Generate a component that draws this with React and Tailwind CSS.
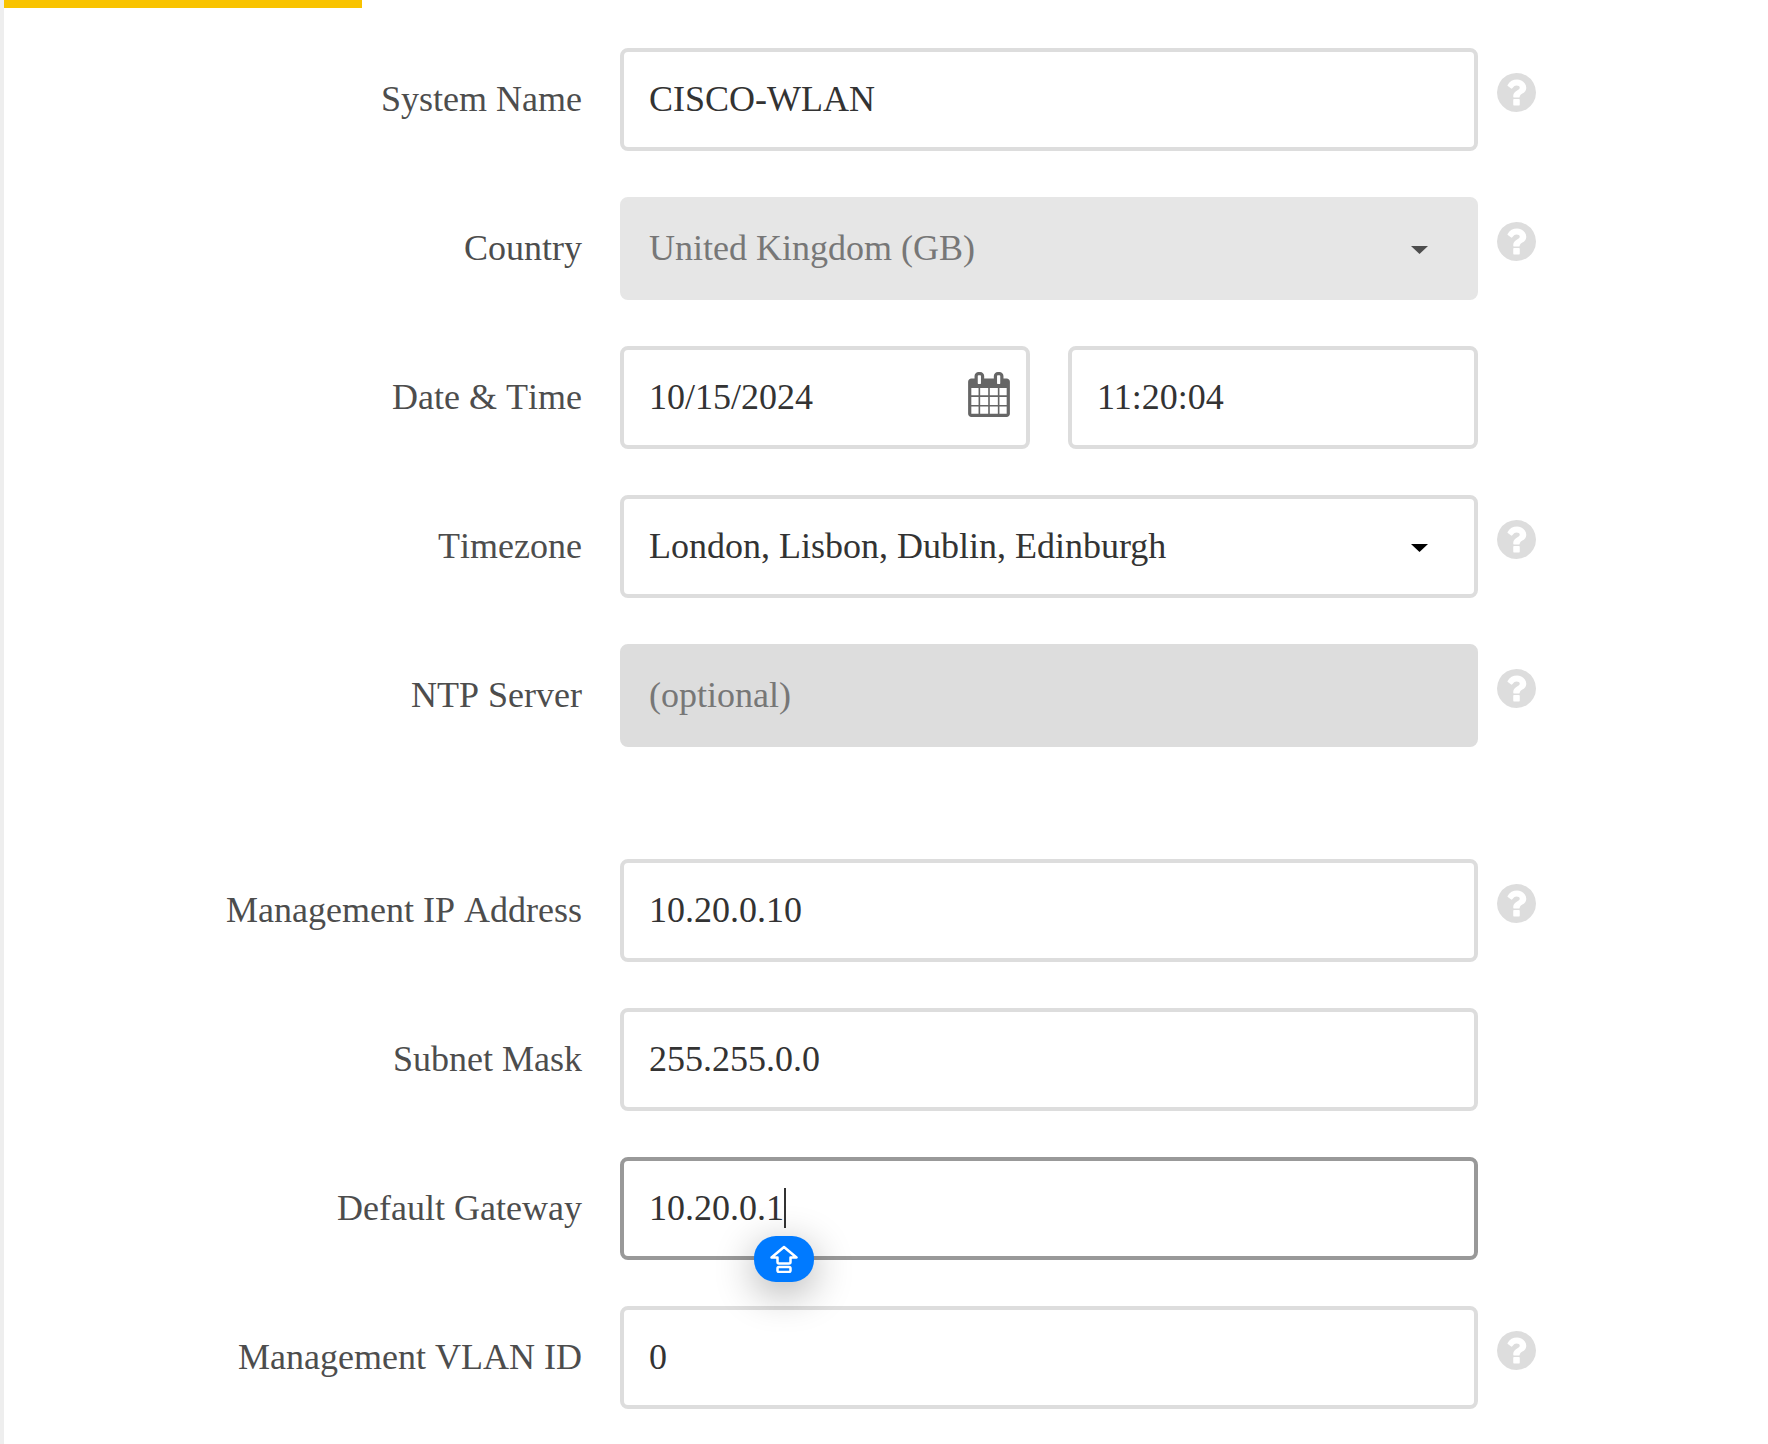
import React from "react";

const box =
  "block w-full h-[103px] rounded-lg border-4 px-[25px] text-4xl leading-10 outline-none";
const open = "border-[#dddddd] bg-white text-[#333333]";

function HelpButton({ about }) {
  return (
    <button
      type="button"
      aria-label={`Help: ${about}`}
      className="mt-[25px] ml-[19px] block size-[39px] shrink-0 text-[#dddddd]"
    >
      <svg viewBox="0 128 1536 1536" fill="currentColor" className="block size-full">
        <path d="M896 1376v-192q0-14-9-23t-23-9h-192q-14 0-23 9t-9 23v192q0 14 9 23t23 9h192q14 0 23-9t9-23zm256-672q0-88-55.5-163t-138.5-116-170-41q-243 0-371 213-15 24 8 42l132 100q7 6 19 6 16 0 25-12 53-68 86-92 34-24 86-24 48 0 85.5 26t37.5 59q0 38-20 61t-68 45q-63 28-115.5 86.5t-52.5 125.5v36q0 14 9 23t23 9h192q14 0 23-9t9-23q0-19 21.5-49.5t54.5-49.5q32-18 49-28.5t46-35 44.5-48 28-60.5 12.5-81zm384 192q0 209-103 385.5t-279.5 279.5-385.5 103-385.5-103-279.5-279.5-103-385.5 103-385.5 279.5-279.5 385.5-103 385.5 103 279.5 279.5 103 385.5z" />
      </svg>
    </button>
  );
}

function CalendarIcon() {
  return (
    <svg viewBox="0 0 1664 1792" fill="currentColor" className="block h-[45px] w-[42px]">
      <path d="M128 1664h288v-288h-288v288zm352 0h320v-288h-320v288zm-352-352h288v-320h-288v320zm352 0h320v-320h-320v320zm-352-384h288v-288h-288v288zm736 736h320v-288h-320v288zm-384-736h320v-288h-320v288zm768 736h288v-288h-288v288zm-384-352h320v-320h-320v320zm-352-864v-288q0-13-9.5-22.5t-22.5-9.5h-64q-13 0-22.5 9.5t-9.5 22.5v288q0 13 9.5 22.5t22.5 9.5h64q13 0 22.5-9.5t9.5-22.5zm736 864h288v-320h-288v320zm-384-384h320v-288h-320v288zm384 0h288v-288h-288v288zm32-480v-288q0-13-9.5-22.5t-22.5-9.5h-64q-13 0-22.5 9.5t-9.5 22.5v288q0 13 9.5 22.5t22.5 9.5h64q13 0 22.5-9.5t9.5-22.5zm384-64v1280q0 52-38 90t-90 38h-1408q-52 0-90-38t-38-90v-1280q0-52 38-90t90-38h128v-96q0-66 47-113t113-47h64q66 0 113 47t47 113v96h384v-96q0-66 47-113t113-47h64q66 0 113 47t47 113v96h128q52 0 90 38t38 90z" />
    </svg>
  );
}

function Row({ id, label, help, children }) {
  return (
    <div className="grid grid-cols-[616fr_858fr_290fr]">
      <label
        htmlFor={id}
        className="flex items-center justify-end pr-[38px] pb-[2px] text-right text-4xl leading-10 text-[#4d4d4d] [font-kerning:none]"
      >
        {label}
      </label>
      <div className="min-w-0">{children}</div>
      {help ? <HelpButton about={label} /> : <div />}
    </div>
  );
}

function TextField({ id, ...props }) {
  return <input id={id} type="text" className={`${box} ${open} pb-[2px]`} {...props} />;
}

function SelectField({ id, value, disabled }) {
  return (
    <div className="relative">
      <select
        id={id}
        disabled={disabled}
        defaultValue={value}
        className={`${box} appearance-none pb-[2px] ${
          disabled
            ? "border-[#e6e6e6] bg-[#e6e6e6] text-[#777777] opacity-100"
            : open
        }`}
      >
        <option value={value}>{value}</option>
      </select>
      <svg
        viewBox="0 0 17 8"
        className={`pointer-events-none absolute top-[49px] right-[50px] h-2 w-[17px] ${
          disabled ? "text-[#4d4d4d]" : "text-black"
        }`}
        fill="currentColor"
      >
        <path d="M0 0H17L8.5 8Z" />
      </svg>
    </div>
  );
}

function CapsLockBadge() {
  return (
    <div className="pointer-events-none absolute top-[79px] left-[134px] flex h-[46px] w-[60px] items-center justify-center rounded-[22px] bg-[#007aff] shadow-[0_10px_40px_rgba(0,0,0,0.32)]">
      <svg
        viewBox="0 0 28 28"
        className="size-7"
        fill="none"
        stroke="white"
        strokeWidth="2.5"
        strokeLinejoin="round"
      >
        <path d="M14 2 L26.5 12.5 H20.5 V17 Q20.5 18.5 19 18.5 H9 Q7.5 18.5 7.5 17 V12.5 H1.5 Z" />
        <rect x="7.5" y="22" width="13" height="5" rx="1.5" />
      </svg>
    </div>
  );
}

export default function App() {
  return (
    <main className="min-h-screen border-l-4 border-[#eeeeee] bg-white font-['Liberation_Serif','Times_New_Roman',serif]">
      <div className="h-2 w-[358px] bg-[#f9c300]" />
      <form className="flex flex-col gap-[46px] pt-10" onSubmit={(e) => e.preventDefault()}>
        <Row id="system-name" label="System Name" help>
          <TextField id="system-name" defaultValue="CISCO-WLAN" />
        </Row>
        <Row id="country" label="Country" help>
          <SelectField id="country" value="United Kingdom (GB)" disabled />
        </Row>
        <Row id="date" label="Date &amp; Time">
          <div className="grid grid-cols-2 gap-[38px]">
            <div className="relative">
              <TextField id="date" defaultValue="10/15/2024" />
              <button
                type="button"
                aria-label="Choose date"
                className="absolute top-[26px] right-5 text-[#666666]"
              >
                <CalendarIcon />
              </button>
            </div>
            <TextField id="time" aria-label="Time" defaultValue="11:20:04" />
          </div>
        </Row>
        <Row id="timezone" label="Timezone" help>
          <SelectField id="timezone" value="London, Lisbon, Dublin, Edinburgh" />
        </Row>
        <Row id="ntp" label="NTP Server" help>
          <input
            id="ntp"
            type="text"
            disabled
            placeholder="(optional)"
            className={`${box} border-[#dddddd] bg-[#dddddd] pb-[2px] placeholder:text-[#777777]`}
          />
        </Row>
        <div className="mt-[66px]">
          <Row id="ip" label="Management IP Address" help>
            <TextField id="ip" defaultValue="10.20.0.10" />
          </Row>
        </div>
        <Row id="mask" label="Subnet Mask">
          <TextField id="mask" defaultValue="255.255.0.0" />
        </Row>
        <Row id="gateway" label="Default Gateway">
          <div className="relative">
            <input
              id="gateway"
              type="text"
              defaultValue="10.20.0.1"
              className={`${box} border-[#999999] bg-white pb-[2px] text-[#333333]`}
            />
            <span className="pointer-events-none absolute top-[31px] left-[164px] h-10 w-[2px] bg-[#333333]" />
            <CapsLockBadge />
          </div>
        </Row>
        <Row id="vlan" label="Management VLAN ID" help>
          <TextField id="vlan" defaultValue="0" />
        </Row>
      </form>
    </main>
  );
}
